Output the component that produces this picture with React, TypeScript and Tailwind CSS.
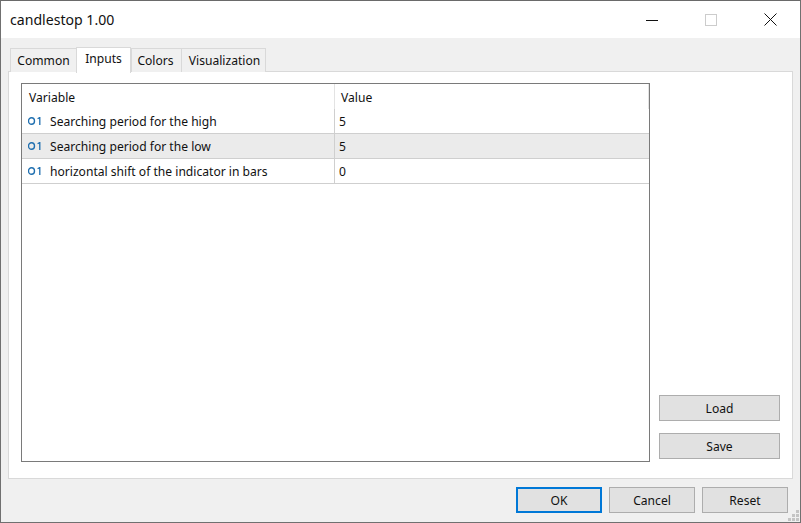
const rows = [
  { name: 'Searching period for the high', value: '5' },
  { name: 'Searching period for the low', value: '5', selected: true },
  { name: 'horizontal shift of the indicator in bars', value: '0' },
]

const tabs = ['Common', 'Inputs', 'Colors', 'Visualization']

function IntIcon() {
  return (
    <svg width="14" height="10" viewBox="0 0 14 10" fill="none" className="shrink-0">
      <ellipse cx="3.5" cy="4" rx="3" ry="3.3" stroke="#1f6fb0" strokeWidth="1.4" />
      <path d="M9.6 1.8 L11.8 0.5 V8" stroke="#1f6fb0" strokeWidth="1.3" />
    </svg>
  )
}

function Btn({ label, primary, w }: { label: string; primary?: boolean; w: string }) {
  return (
    <button
      className={`${w} h-[26px] pt-[2px] bg-[#e1e1e1] text-[12.1px] text-[#111] ${
        primary ? 'border-2 border-[#0078d7]' : 'border border-[#adadad]'
      }`}
    >
      {label}
    </button>
  )
}

export default function App() {
  return (
    <div className="relative w-[801px] h-[523px] flex flex-col bg-[#f0f0f0] border border-[#707070] border-t-[#6a6a6a] font-['Noto_Sans','Liberation_Sans',sans-serif] text-[12.1px] text-[#111] overflow-hidden">
      <div className="h-[37px] shrink-0 bg-white flex items-center justify-between pl-[9px] pr-px">
        <span className="text-[14.1px] text-[#111]">candlestop 1.00</span>
        <div className="flex items-center">
          <div className="w-[58px] flex justify-center">
            <svg width="12" height="12" viewBox="0 0 12 12"><path d="M0 6.5 H12" stroke="#111" strokeWidth="1" /></svg>
          </div>
          <div className="w-[60px] flex justify-center">
            <svg width="12" height="12" viewBox="0 0 12 12"><rect x="0.5" y="0.5" width="11" height="11" fill="none" stroke="#cccccc" /></svg>
          </div>
          <div className="w-[58px] flex justify-center">
            <svg width="13" height="13" viewBox="0 0 13 13"><path d="M0.5 0.5 L12.5 12.5 M12.5 0.5 L0.5 12.5" stroke="#111" strokeWidth="1" /></svg>
          </div>
        </div>
      </div>

      <div className="flex-1 min-h-0 flex flex-col px-[7px] pt-[8px] pb-[8px]">
        <div className="flex items-end h-[26px] pl-[2px] relative z-10 -mb-px">
          {tabs.map((t) =>
            t === 'Inputs' ? (
              <div key={t} className="w-[55px] h-[26px] -mb-px bg-white border border-b-0 border-[#d9d9d9] flex items-center justify-center pb-[2px]">
                {t}
              </div>
            ) : (
              <div
                key={t}
                className={`${t === 'Common' ? 'w-[66px]' : t === 'Colors' ? 'w-[50px] pr-[2px]' : 'w-[85px] border-r pl-[2px]'} h-[24px] bg-[#f0f0f0] border-t border-l border-[#d9d9d9] flex items-center justify-center pt-px`}
              >
                {t}
              </div>
            ),
          )}
        </div>

        <div className="h-[408px] shrink-0 bg-white border border-[#d9d9d9] flex pl-[12px] pt-[11px] pb-[16px] pr-[12px]">
          <div className="w-[629px] border border-[#7a7a7a] flex flex-col">
            <div className="flex h-[25px] shrink-0">
              <div className="w-[313px] pl-[7px] pt-[3px] flex items-center border-r border-[#e3e3e3]">Variable</div>
              <div className="flex-1 pl-[6px] pt-[3px] flex items-center border-r border-[#e3e3e3]">Value</div>
            </div>
            {rows.map((r) => (
              <div
                key={r.name}
                className={`flex h-[25px] shrink-0 border-b border-[#cfcfcf] ${r.selected ? 'bg-[#ebebeb]' : 'bg-white'}`}
              >
                <div className="w-[313px] pl-[6px] pt-[2px] flex items-center gap-[8px] border-r border-[#cfcfcf] whitespace-nowrap">
                  <IntIcon />
                  <span>{r.name}</span>
                </div>
                <div className="flex-1 pl-[4px] pt-[2px] flex items-center">{r.value}</div>
              </div>
            ))}
          </div>
          <div className="flex-1 flex flex-col items-end justify-end gap-[12px] pb-[3px]">
            <Btn label="Load" w="w-[121px]" />
            <Btn label="Save" w="w-[121px]" />
          </div>
        </div>

        <div className="flex-1 flex items-start justify-end gap-[7px] pt-[8px] pr-[5px]">
          <Btn label="OK" primary w="w-[86px]" />
          <Btn label="Cancel" w="w-[86px]" />
          <Btn label="Reset" w="w-[86px]" />
        </div>
      </div>

      <svg className="absolute right-[1px] bottom-[1px]" width="11" height="11" viewBox="0 0 11 11" fill="#c4c4c4">
        <rect x="8" y="0" width="3" height="3" />
        <rect x="4" y="4" width="3" height="3" />
        <rect x="8" y="4" width="3" height="3" />
        <rect x="0" y="8" width="3" height="3" />
        <rect x="4" y="8" width="3" height="3" />
        <rect x="8" y="8" width="3" height="3" />
      </svg>
    </div>
  )
}
